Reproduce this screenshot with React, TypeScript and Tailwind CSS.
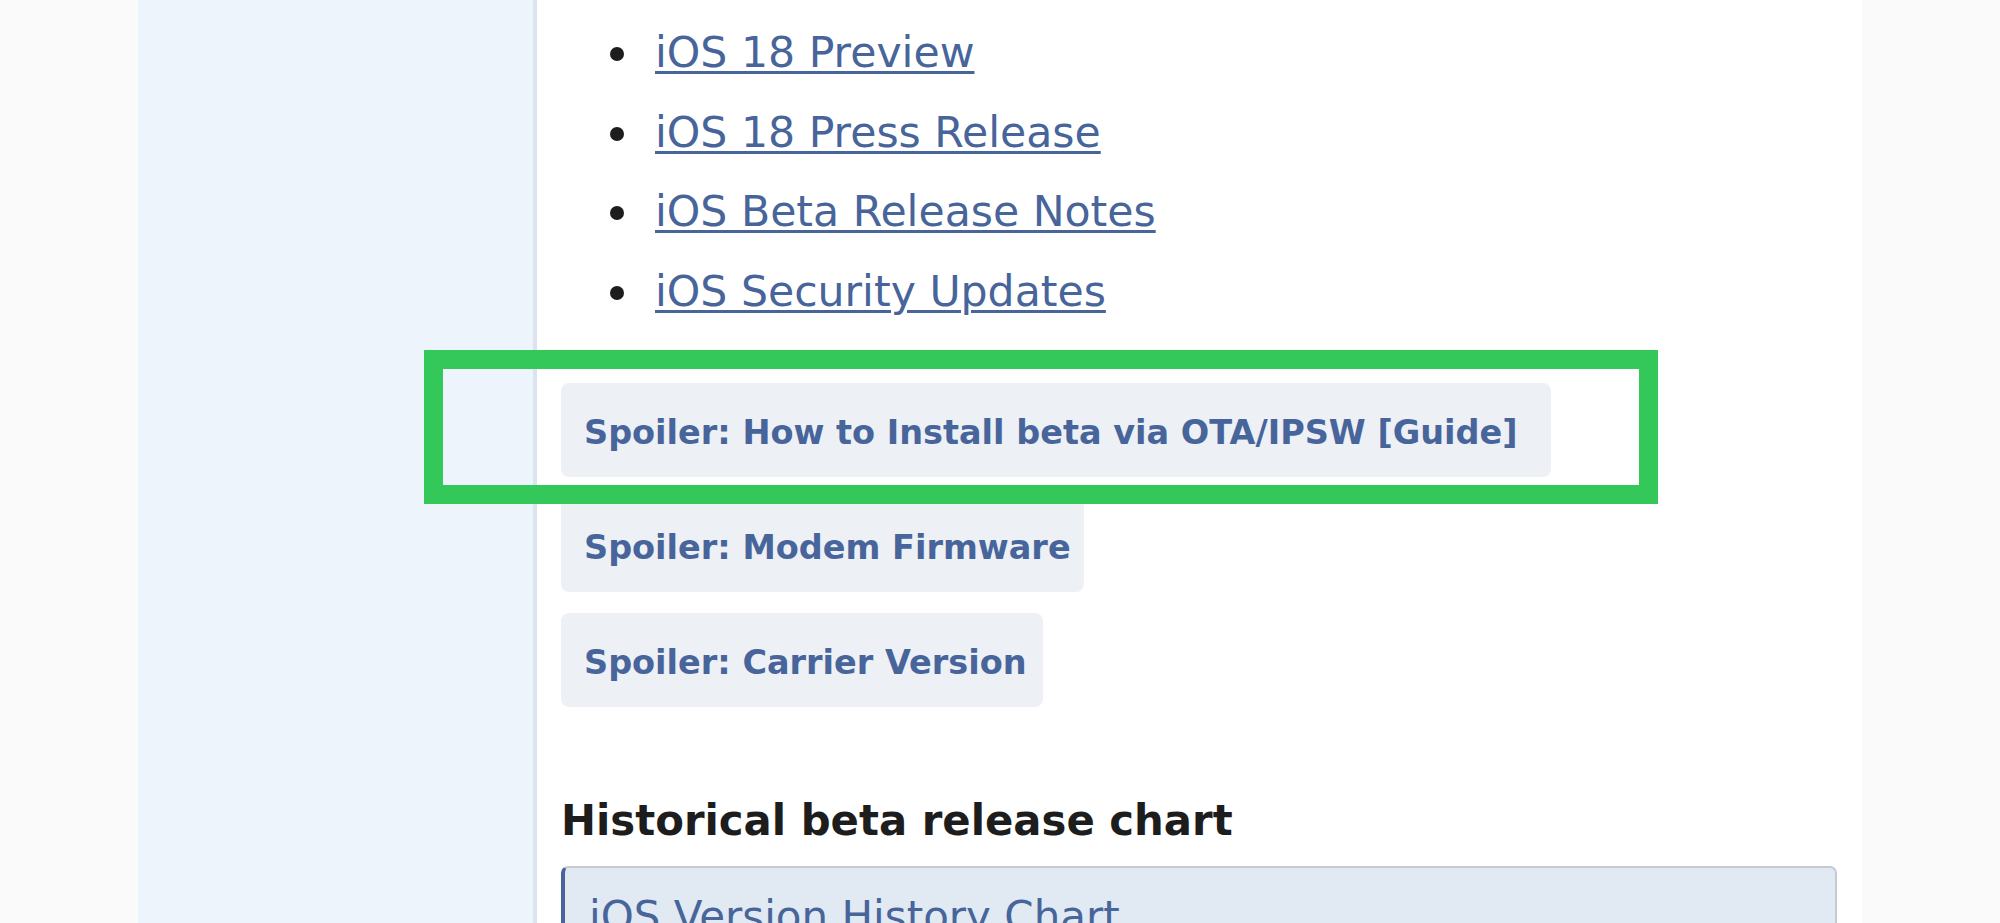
import React from "react";

const links: string[] = [
  "iOS 18 Preview",
  "iOS 18 Press Release",
  "iOS Beta Release Notes",
  "iOS Security Updates",
];

const spoilers = [
  { label: "Spoiler: How to Install beta via OTA/IPSW [Guide]", w: "w-[990px]" },
  { label: "Spoiler: Modem Firmware", w: "w-[523px]" },
  { label: "Spoiler: Carrier Version", w: "w-[482px]" },
];

const SpoilerButton: React.FC<{ label: string; w: string }> = ({ label, w }) => {
  return (
    <div>
      <button
        className={`${w} whitespace-nowrap rounded-[8px] bg-[#edf0f5] pb-[19px] pl-[23px] pt-[25px] text-left text-[33.5px] font-bold leading-[50px] text-[#47659a]`}
      >
        {label}
      </button>
    </div>
  );
};

const App: React.FC = () => {
  return (
    <div
      className="relative h-[923px] w-full overflow-hidden bg-[#fafafa]"
      style={{ fontFamily: '"DejaVu Sans", Verdana, sans-serif' }}
    >
      <div className="mx-auto flex h-full w-[1724px]">
        {/* sidebar */}
        <div className="w-[399px] shrink-0 border-r-4 border-[#dae3ee] bg-[#edf4fb]"></div>

        {/* post body */}
        <div className="flex-1 bg-white pl-[24px] pr-[25px] pt-[13px]">
          <ul>
            {links.map((l) => (
              <li key={l} className="flex h-[79.5px] items-center">
                <span className="ml-[49px] mt-[3px] h-[14px] w-[14px] rounded-full bg-[#1d1d1d]"></span>
                <a
                  href="#"
                  className="ml-[31px] text-[42.6px] leading-[79.5px] text-[#47659a] underline decoration-[2.5px] underline-offset-[4px]"
                >
                  {l}
                </a>
              </li>
            ))}
          </ul>

          <div className="mt-[52px] flex flex-col gap-[21px]">
            {spoilers.map((s) => (
              <SpoilerButton key={s.label} label={s.label} w={s.w} />
            ))}
          </div>

          <h3 className="mt-[89px] text-[41.8px] font-bold leading-[50px] text-[#1d1d1d]">
            Historical beta release chart
          </h3>

          <div className="mt-[20px] rounded-t-[7px] border-l-4 border-r-2 border-t-2 border-l-[#47659a] border-r-[#c6cbd1] border-t-[#c6cbd1] bg-[#e1e9f3] pl-[24px] pt-[24px]">
            <span className="text-[42px] leading-[50px] text-[#47659a]">
              iOS Version History Chart
            </span>
          </div>
        </div>
      </div>

      {/* highlight annotation */}
      <div className="absolute left-[424px] top-[350px] h-[154px] w-[1234px] border-[19px] border-[#34c759]"></div>
    </div>
  );
};

export default App;
